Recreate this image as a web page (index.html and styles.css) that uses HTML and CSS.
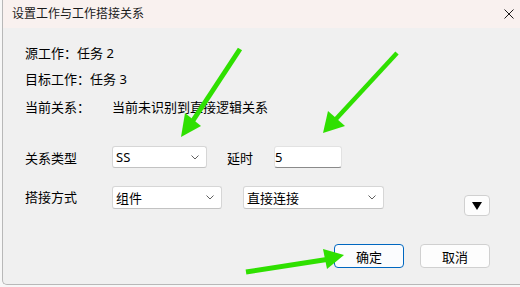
FILE: index.html
```html
<!DOCTYPE html>
<html lang="zh-CN">
<head>
<meta charset="utf-8">
<link rel="stylesheet" href="styles.css">
</head>
<body>
<div class="window">
  <div class="titlebar">
    <span class="title">设置工作与工作搭接关系</span>
    <svg class="close" width="10" height="10" viewBox="0 0 10 10"><path d="M0.5 0.5L9.5 9.5M9.5 0.5L0.5 9.5" stroke="#1a1a1a" stroke-width="1" fill="none"/></svg>
  </div>
  <div class="content">
    <div class="info r1">源工作：任务 2</div>
    <div class="info r2">目标工作：任务 3</div>
    <div class="info r3"><span class="lbl">当前关系：</span><span>当前未识别到直接逻辑关系</span></div>
    <div class="row r4">
      <span class="lbl">关系类型</span>
      <div class="select w95"><span>SS</span><svg class="chev" width="8" height="5" viewBox="0 0 8 5"><path d="M0.5 0.5L4 4L7.5 0.5" stroke="#606060" fill="none"/></svg></div>
      <span class="delay">延时</span>
      <div class="input">5</div>
    </div>
    <div class="row r5">
      <span class="lbl">搭接方式</span>
      <div class="select w110"><span>组件</span><svg class="chev" width="8" height="5" viewBox="0 0 8 5"><path d="M0.5 0.5L4 4L7.5 0.5" stroke="#606060" fill="none"/></svg></div>
      <div class="select w141"><span>直接连接</span><svg class="chev" width="8" height="5" viewBox="0 0 8 5"><path d="M0.5 0.5L4 4L7.5 0.5" stroke="#606060" fill="none"/></svg></div>
      <div class="small-btn"><svg width="10" height="8" viewBox="0 0 10 8"><path d="M0 0H10L5 8Z" fill="#000"/></svg></div>
    </div>
    <div class="buttons">
      <div class="btn primary">确定</div>
      <div class="btn">取消</div>
    </div>
  </div>
  <svg class="arrows" width="520" height="287" viewBox="0 0 520 287">
    <g fill="#2fe000" stroke="#2fe000" stroke-linecap="butt">
      <line x1="240" y1="49" x2="192" y2="122" stroke-width="5"/>
      <polygon points="181,137 185,113 201,126" stroke="none"/>
      <line x1="397" y1="53" x2="336" y2="119" stroke-width="4.5"/>
      <polygon points="323,133 328,111 345,126" stroke="none"/>
      <line x1="246" y1="272" x2="330" y2="259" stroke-width="5"/>
      <polygon points="344,255 323,249 327,269" stroke="none"/>
    </g>
  </svg>
</div>
</body>
</html>
```

FILE: styles.css
```css
* { box-sizing: border-box; }
html, body { margin: 0; padding: 0; background: #f7f7f7; }
body {
  width: 520px;
  height: 287px;
  overflow: hidden;
  font-family: "Noto Sans", "Noto Sans CJK SC", sans-serif;
  font-size: 13px;
  color: #000;
}
.window {
  position: relative;
  margin-left: 2px;
  width: 518px;
  height: 285px;
  background: #f0f0f0;
  border-left: 1px solid #b8b8b8;
  border-bottom: 1px solid #b8b8b8;
  border-bottom-left-radius: 5px;
}
.titlebar {
  height: 28px;
  background: #f9f1ef;
  display: flex;
  align-items: center;
  justify-content: space-between;
  padding: 0 6px 0 9px;
}
.title {
  font-size: 12px;
  line-height: 16px;
  color: #1a1a1a;
}
.close { display: block; }
.content {
  padding: 0 30px 0 22px;
  display: flex;
  flex-direction: column;
}
.info { line-height: 16px; display: flex; }
.r1 { margin-top: 17px; }
.r2 { margin-top: 10px; }
.r3 { margin-top: 12px; }
.lbl { width: 87px; flex: none; }
.row { display: flex; align-items: center; }
.r4 { margin-top: 31px; height: 22px; }
.r5 { margin-top: 18px; height: 23px; align-items: flex-start; }
.r5 .lbl { line-height: 23px; }
.select {
  height: 100%;
  background: #fff;
  border: 1px solid #d6d6d6;
  border-bottom-color: #c2c2c2;
  border-radius: 3px;
  display: flex;
  align-items: center;
  justify-content: space-between;
  padding: 0 7px 0 3px;
}
.w95 { width: 95px; }
.w110 { width: 110px; }
.w141 { width: 141px; margin-left: 21px; }
.delay { margin-left: 20px; width: 47px; }
.input {
  width: 68px;
  height: 22px;
  background: #fff;
  border: 1px solid #e2e2e2;
  border-bottom: 1px solid #8a8a8a;
  border-radius: 3px;
  padding-left: 0;
  line-height: 20px;
}
.small-btn {
  margin-left: auto;
  margin-top: 9px;
  width: 26px;
  height: 21px;
  background: #fdfdfd;
  border: 1px solid #d0d0d0;
  border-radius: 4px;
  display: flex;
  align-items: center;
  justify-content: center;
}
.buttons {
  margin-top: 35px;
  display: flex;
  justify-content: flex-end;
  gap: 16px;
}
.btn {
  width: 70px;
  height: 24px;
  border: 1px solid #d0d0d0;
  border-radius: 4px;
  background: #fdfdfd;
  display: flex;
  align-items: center;
  justify-content: center;
}
.btn.primary { border-color: #0067c0; background: #fbfcfe; }
.arrows { position: absolute; left: -3px; top: 0; pointer-events: none; }
```
